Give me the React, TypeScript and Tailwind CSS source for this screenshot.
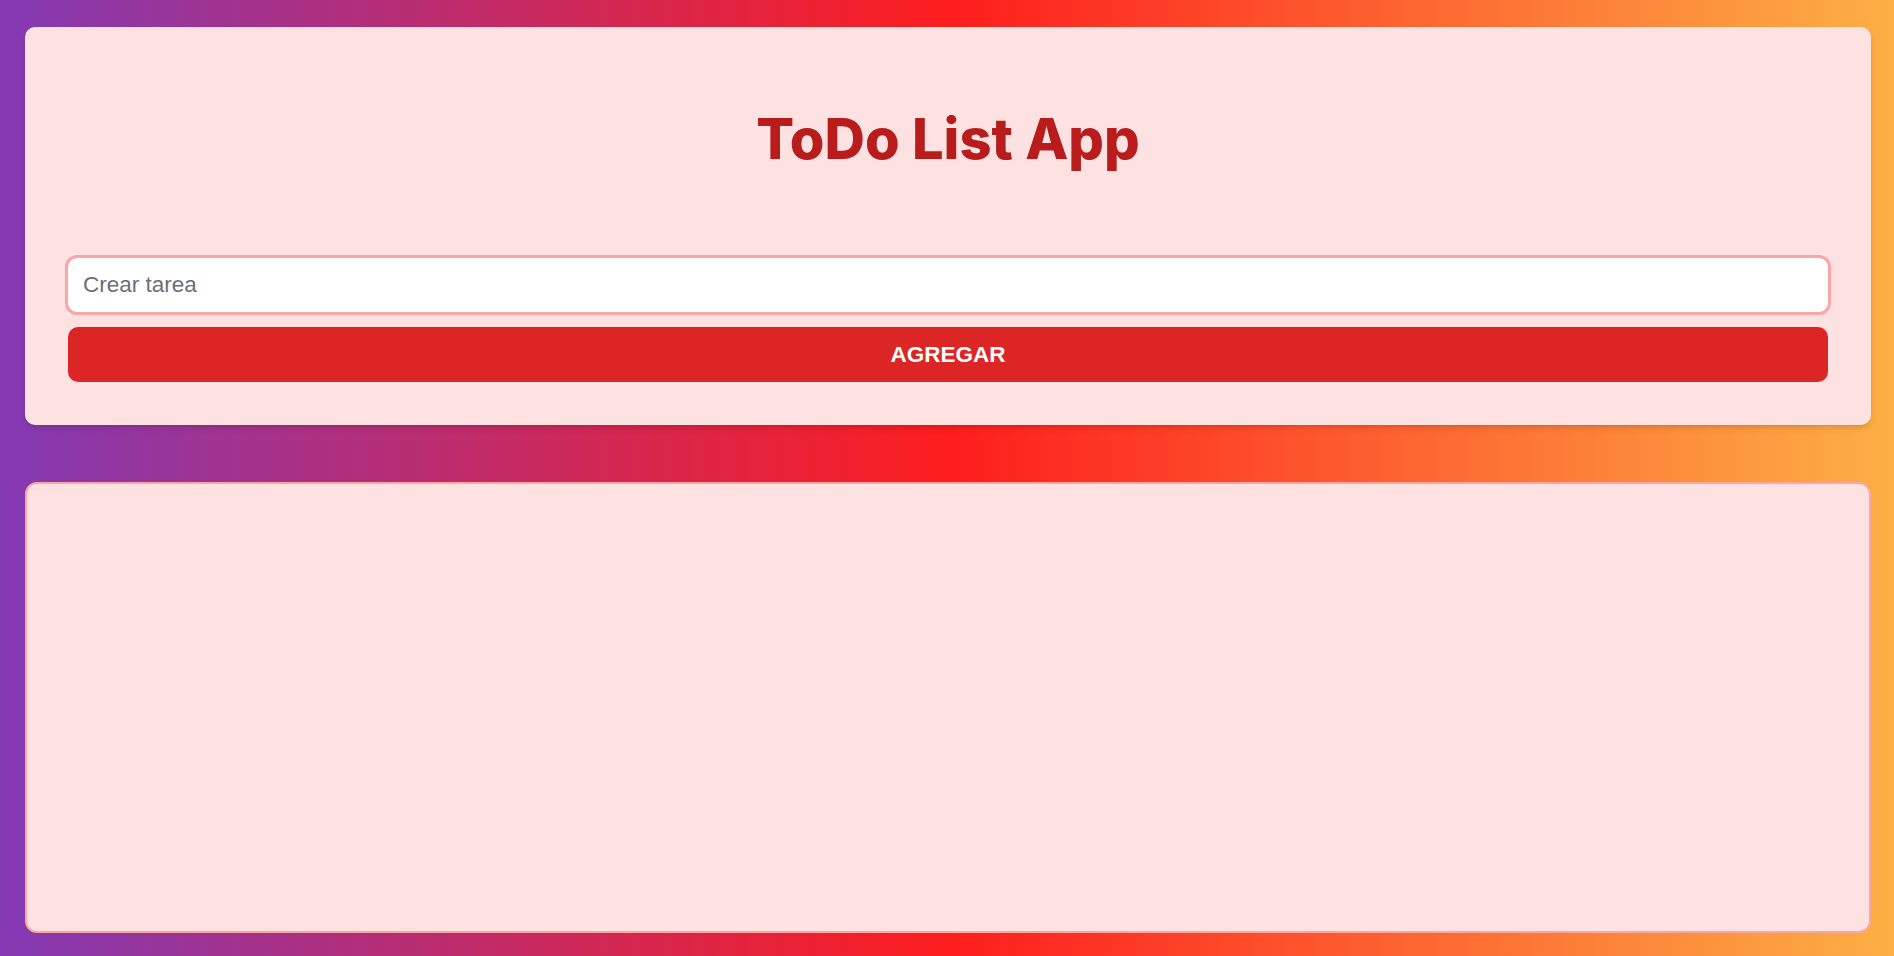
export default function App() {
  return (
    <div className="min-h-screen h-[956px] flex flex-col gap-[57px] pt-[27px] pb-[23px] pl-[25px] pr-[23px] bg-[linear-gradient(90deg,#833ab4_0%,#fd1d1d_50%,#fcb045_100%)]">
      <TodoForm />
      <TodoList />
    </div>
  )
}

function TodoForm() {
  return (
    <div className="bg-[#fee2e2] rounded-[10px] shadow-md px-10 pt-[76px] pb-[43px]">
      <h1 className="text-center text-[#b91c1c] font-extrabold text-[56px] leading-[72px] font-['Inter',sans-serif]">
        ToDo List App
      </h1>
      <div className="mt-[80px] flex flex-col gap-[12px] font-['Liberation_Sans',Arial,sans-serif]">
        <input
          type="text"
          placeholder="Crear tarea"
          className="w-full h-[60px] bg-white border-[3px] border-[#fca5a5] rounded-[12px] px-[15px] text-[22.5px] text-gray-800 placeholder:text-[#6b6f78] outline-none"
        />
        <button className="mx-[3px] h-[55px] bg-[#dc2626] rounded-[10px] text-white font-bold text-[22.5px]">
          AGREGAR
        </button>
      </div>
    </div>
  )
}

function TodoList() {
  return <div className="flex-1 bg-[#fee2e2] border-2 border-[#fca5a5] rounded-[12px]" />
}
